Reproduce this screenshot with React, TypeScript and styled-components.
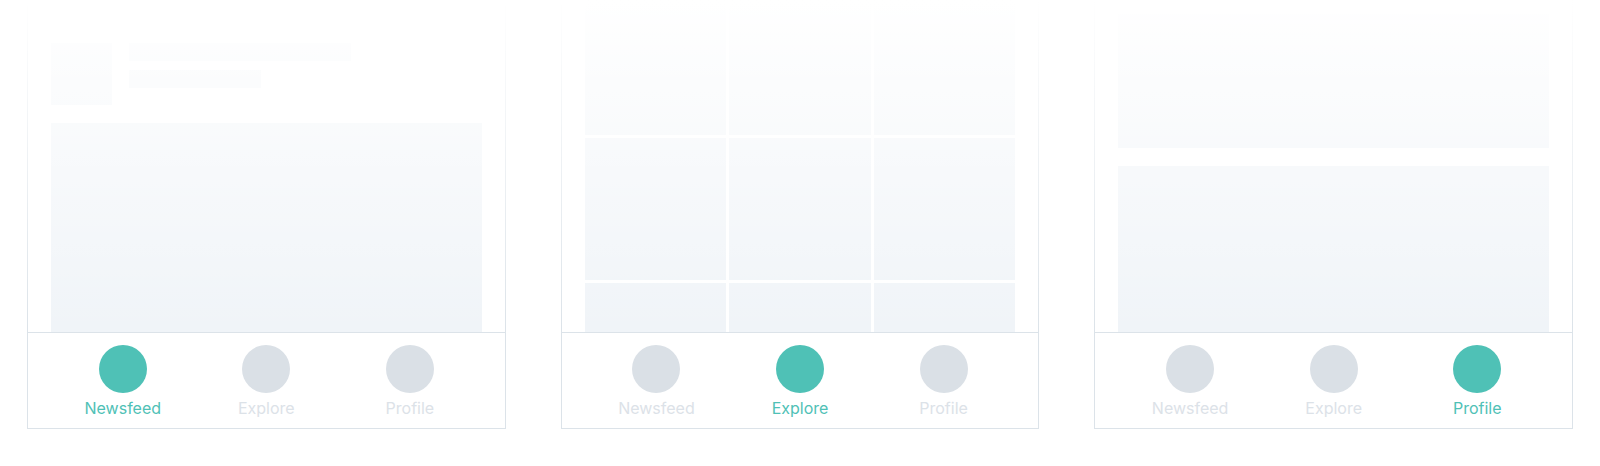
import React from 'react';
import styled, { createGlobalStyle } from 'styled-components';

const GlobalStyle = createGlobalStyle`
  body {
    margin: 0;
    background: #ffffff;
    font-family: Inter, "Noto Sans", sans-serif;
  }
`;

const TABS = ['Newsfeed', 'Explore', 'Profile'];

export default function App() {
    return (
        <>
            <GlobalStyle />
            <Page>
                <Phone>
                    <Screen>
                        <FeedHeader>
                            <Avatar />
                            <HeaderLines>
                                <Bar $width={222} />
                                <Bar $width={132} />
                            </HeaderLines>
                        </FeedHeader>
                        <Photo />
                    </Screen>
                    <TabBar active={0} />
                </Phone>

                <Phone>
                    <Screen>
                        <Grid>
                            {Array.from({ length: 9 }).map((_, i) => (
                                <Cell key={i} />
                            ))}
                        </Grid>
                    </Screen>
                    <TabBar active={1} />
                </Phone>

                <Phone>
                    <Screen>
                        <Cover />
                        <ProfileBody />
                    </Screen>
                    <TabBar active={2} />
                </Phone>
            </Page>
        </>
    );
}

const TabBar = ({ active }: { active: number }) => (
    <Tabs>
        {TABS.map((label, i) => (
            <Tab key={label}>
                <TabIcon $active={i === active} />
                <TabLabel $active={i === active}>{label}</TabLabel>
            </Tab>
        ))}
    </Tabs>
);

const Page = styled.div`
    display: flex;
    align-items: flex-start;
    gap: 55px;
    padding: 0 27px;
    height: 466px;
    box-sizing: border-box;
`;

const Phone = styled.div`
    position: relative;
    flex: 1 1 0;
    min-width: 0;
    border: 1px solid #dce3e9;
    border-top: none;

    // fade of the top of the screen, over content and side borders
    &::before {
        content: '';
        position: absolute;
        top: 0;
        left: -1px;
        right: -1px;
        height: 332px;
        background: linear-gradient(to bottom, #ffffff 0%, rgba(255, 255, 255, 0) 100%);
        pointer-events: none;
        z-index: 1;
    }
`;

const Screen = styled.div`
    height: 332px;
    overflow: hidden;
    padding: 0 23px;
    box-sizing: border-box;
`;

const Block = styled.div`
    background: #f0f4f8;
`;

const FeedHeader = styled.div`
    display: flex;
    gap: 17px;
    padding-top: 43px;
`;

const Avatar = styled(Block)`
    width: 61px;
    height: 62px;
    flex-shrink: 0;
`;

const HeaderLines = styled.div`
    display: flex;
    flex-direction: column;
    gap: 9px;
`;

const Bar = styled(Block)<{ $width: number }>`
    width: ${p => p.$width}px;
    height: 18px;
`;

const Photo = styled(Block)`
    margin-top: 18px;
    height: 260px;
`;

const Grid = styled.div`
    display: grid;
    grid-template-columns: repeat(3, 1fr);
    grid-auto-rows: 142px;
    gap: 3px;
    margin-top: -7px;
`;

const Cell = styled(Block)``;

const Cover = styled(Block)`
    margin-top: 14px;
    height: 134px;
`;

const ProfileBody = styled(Block)`
    margin-top: 18px;
    height: 200px;
`;

const Tabs = styled.nav`
    display: grid;
    grid-template-columns: repeat(3, 1fr);
    padding: 12px 23px 10px;
    border-top: 1px solid #dce3e9;
`;

const Tab = styled.div`
    display: flex;
    flex-direction: column;
    align-items: center;
    gap: 5px;
`;

const TabIcon = styled.span<{ $active: boolean }>`
    width: 48px;
    height: 48px;
    border-radius: 50%;
    background: ${p => (p.$active ? '#4fc1b6' : '#dae0e6')};
`;

const TabLabel = styled.span<{ $active: boolean }>`
    font-size: 16px;
    line-height: 20px;
    color: ${p => (p.$active ? '#4fc1b6' : '#dce2e8')};
`;
